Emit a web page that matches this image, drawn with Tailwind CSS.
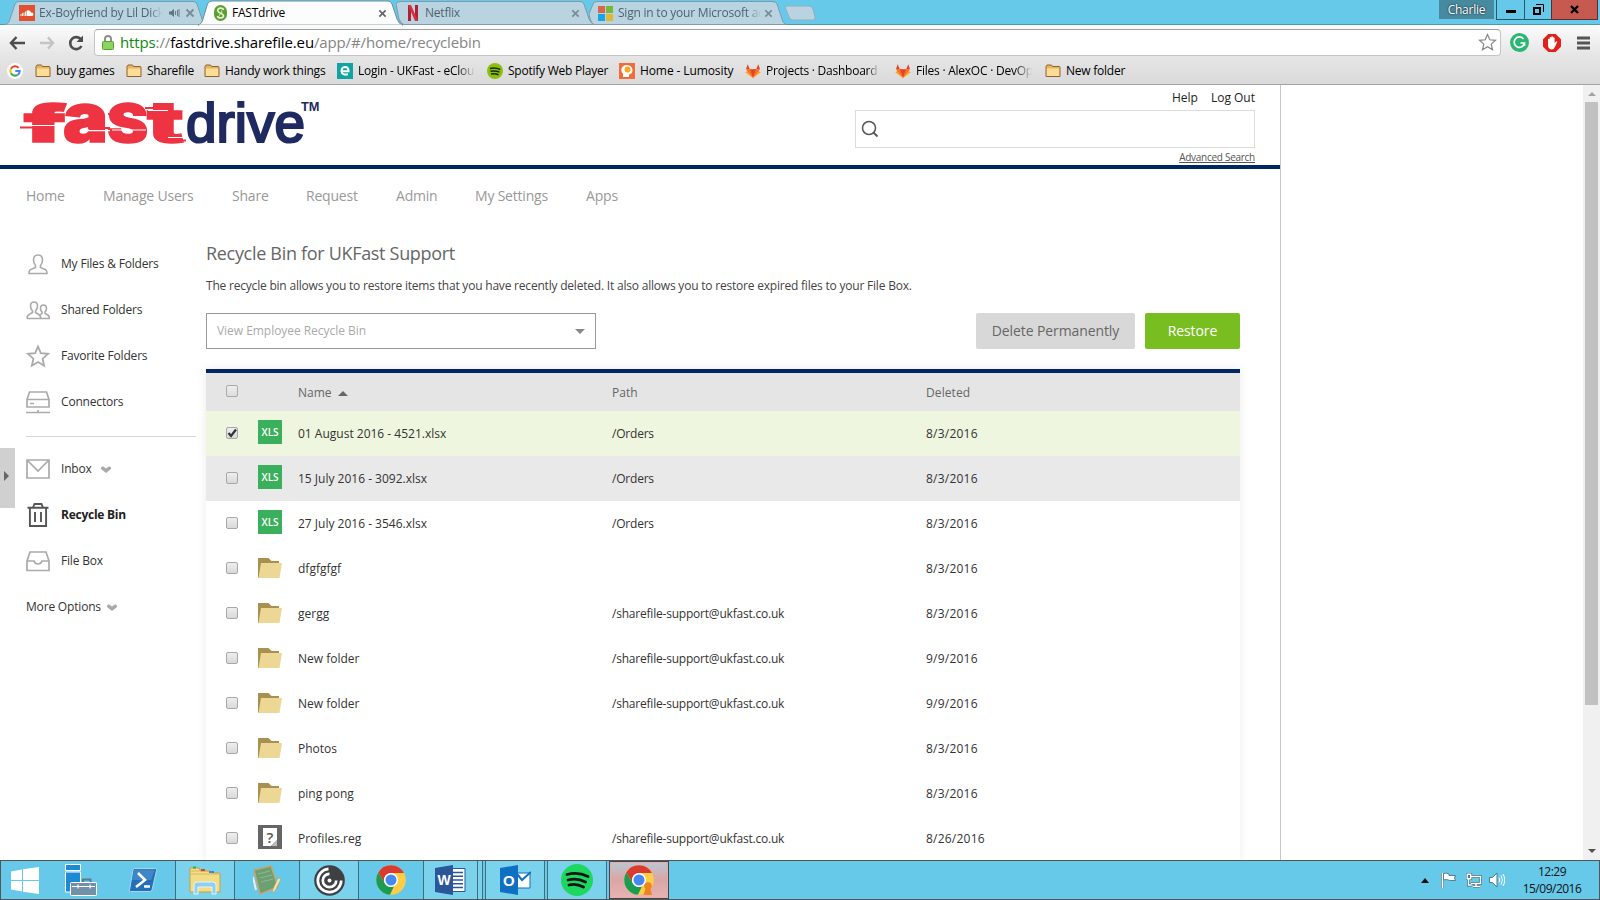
<!DOCTYPE html>
<html lang="en">
<head>
<meta charset="utf-8">
<title>FASTdrive</title>
<script src="https://cdn.jsdelivr.net/npm/@tailwindcss/browser@4"></script>
</head>
<body class="h-[900px] w-[1600px] overflow-hidden bg-white font-['Open_Sans',sans-serif] text-[12px] whitespace-nowrap">
<svg class="hidden">
  <symbol id="bm-folder" viewBox="0 0 16 14"><path d="M1 12.500V2.500L2 1h4.500l1 1.500H14.500L15 3.500V12.500z" fill="#e9b45c" stroke="#8a6534"/><path d="M1.800 4.500h12.400v7.500H1.800z" fill="#fddc96"/></symbol>
  <symbol id="close" viewBox="0 0 10 10"><path d="M1.500 1.500l7 7M8.500 1.500l-7 7" stroke="currentColor" stroke-width="1.900" fill="none"/></symbol>
  <symbol id="gitlab" viewBox="0 0 16 14"><path d="M8 14L0.200 8.200 5.200 5.200h5.600l5 3z" fill="#fca326"/><path d="M8 14L4.800 5.200h6.400z" fill="#e24329"/><path d="M8 14L1 5.200h3.800zM8 14l7-8.800h-3.800z" fill="#fc6d26"/><path d="M1 5.200L2.700.3l2.100 4.900zM15 5.200L13.300.3l-2.100 4.900z" fill="#e24329"/></symbol>
  <symbol id="folder" viewBox="0 0 24 20"><path d="M0 0h10.500l3 3H21v8L0 20z" fill="#a89150"/><path d="M3 5h21l-2.500 15H.5z" fill="#edd795"/></symbol>
  <symbol id="chrome" viewBox="0 0 30 30"><circle cx="15" cy="15" r="14.800" fill="#fecd45"/><path d="M2.200 7.600A14.800 14.800 0 0 1 27.900 8H15a7 7 0 0 0-6.200 10.300z" fill="#da3b30"/><path d="M2.200 7.600L9 18.500a7 7 0 0 0 9 2.800L14 29.800A14.800 14.800 0 0 1 2.200 7.600z" fill="#1a9c55"/><circle cx="15" cy="15" r="7" fill="#fff"/><circle cx="15" cy="15" r="5.500" fill="#4688f1"/></symbol>
  <symbol id="chev" viewBox="0 0 10 7"><path d="M0 1.500L1.800.2 5 2.500 8.200.2 10 1.500V3L5 7 0 3z" fill="#aaa"/></symbol>
</svg>

<!-- Window title bar with tabs -->
<header class="relative flex h-[25px] w-full items-start justify-between border-b border-[#4c98ad] bg-[#66c9ea] tracking-[-0.22px] text-[#4e6571]">
  <div class="flex">
    <div class="relative ml-1 flex h-[24px] w-[200px] items-center pt-[2px] pl-[15px]">
      <svg class="absolute top-0 left-0 h-[25px] w-[200px]" viewBox="0 0 200 25"><path d="M0 24.500C4 24.500 5 22 6 19L11 4Q12 1.500 15 1.500H189Q192 1.500 193 4L198 19Q199 24 200 24.500" fill="#b9d3e0" stroke="#7c9cab"/></svg>
      <svg class="relative size-4" viewBox="0 0 16 16"><path fill="#e2502d" d="M0 0h16v16H0z"/><path d="M2 9v2M3.500 8v3M5 7.500v3.500M6.500 6.500V11" stroke="#fff" stroke-width=".9"/><path d="M7.500 11V5.800a3 3 0 0 1 4.500 2 1.700 1.700 0 1 1 .5 3.200z" fill="#fff"/></svg>
      <span class="relative ml-1 w-[123px] overflow-hidden mask-r-from-90%">Ex-Boyfriend by Lil Dick</span>
      <svg class="relative ml-[7px] h-[10px] w-[11px]" viewBox="0 0 11 10"><path d="M0 3.500h2L5 1v8L2 6.500H0z" fill="#5f747e"/><path d="M6.500 3v4M8.500 2v6M10 1v8" stroke="#5f747e" stroke-width=".9"/></svg>
      <svg class="relative ml-[5px] size-[10px] text-[#7a8d97]"><use href="#close"/></svg>
    </div>
    <div class="relative z-10 -ml-[6px] flex h-[25px] w-[205px] items-center pt-[1px] pl-[16px] text-black">
      <svg class="absolute top-0 left-0 h-[26px] w-[205px]" viewBox="0 0 205 26"><path d="M0 25C3 24.500 4 22 5 19L9.500 4Q10.500 1 14 1H190Q193 1 194 4L199 19Q201 24.500 205 25z" fill="#fcfcfc" stroke="#6d8f9d"/><path d="M1 25.500h203" stroke="#fbfbfb" stroke-width="1.500"/></svg>
      <svg class="relative h-[16px] w-[13px]" viewBox="0 0 13 16"><rect width="13" height="16" rx="6.500" fill="#5a9e36"/><path d="M9.500 5C9 2.500 3.500 2.500 3.700 5.500S9.500 8 9.500 10.800 4 13.500 3.500 11" fill="none" stroke="#e8f4c8" stroke-width="1.700"/><path d="M7.500 5.500C9 8 5 9 5.500 10.500" fill="none" stroke="#e8f4c8"/></svg>
      <span class="relative ml-[5px]">FASTdrive</span>
      <svg class="absolute top-[9px] left-[180px] size-[9px] text-[#666]"><use href="#close"/></svg>
    </div>
    <div class="relative -ml-[7px] flex h-[24px] w-[200px] items-center pt-[2px] pl-[12px]">
      <svg class="absolute top-0 left-0 h-[25px] w-[200px]" viewBox="0 0 200 25"><path d="M0 4Q1 1.500 5 1.500H184Q187 1.500 188 4L193 19Q195 24 199 24.500H8Q5 24 3 19z" fill="#b9d3e0" stroke="#7c9cab"/></svg>
      <svg class="relative h-[16px] w-[10px]" viewBox="0 0 10 16"><path d="M0 0h3v16H0zM7 0h3v16H7z" fill="#b22033"/><path d="M0 0h3l7 16H7z" fill="#d0323f"/></svg>
      <span class="relative ml-[7px]">Netflix</span>
      <svg class="absolute top-[9px] left-[175px] size-[9px] text-[#7a8d97]"><use href="#close"/></svg>
    </div>
    <div class="relative -ml-[7px] flex h-[24px] w-[198px] items-center pt-[2px] pl-[9px]">
      <svg class="absolute top-0 left-0 h-[25px] w-[198px]" viewBox="0 0 198 25"><path d="M5 24.500Q2 24 0 14L4 4Q5 1.500 8 1.500H183Q187 1.500 188 4L193 19Q194 24 198 24.500z" fill="#b9d3e0" stroke="#7c9cab"/></svg>
      <svg class="relative size-[15px]" viewBox="0 0 15 15"><path fill="#d9654a" d="M0 0h7v7H0z"/><path fill="#7ab637" d="M8 0h7v7H8z"/><path fill="#18a5e5" d="M0 8h7v7H0z"/><path fill="#dfb836" d="M8 8h7v7H8z"/></svg>
      <span class="relative ml-[5px] w-[143px] overflow-hidden mask-r-from-90%">Sign in to your Microsoft ac</span>
      <svg class="absolute top-[9px] left-[175px] size-[9px] text-[#7a8d97]"><use href="#close"/></svg>
    </div>
    <svg class="-ml-[3px] h-[25px] w-[32px]" viewBox="0 0 32 25"><path d="M2.500 6H25Q28 6 29 9L31 17Q31.500 20 29 20H9Q6 20 5 17L1.500 8Q1.500 6 2.500 6z" fill="#b9d3e0" stroke="#8fb0c0"/></svg>
  </div>
  <div class="mr-[2px] flex">
    <div class="mr-[2px] flex h-[19px] w-[55px] items-center justify-center bg-[#478aa0] text-white text-shadow-[0_0_2px_#000]">Charlie</div>
    <div class="flex h-5 w-[29px] items-center justify-center border border-t-0 border-[#2b5868]"><i class="mt-[4px] h-[3px] w-[10px] bg-black"></i></div>
    <div class="flex h-5 w-[26px] items-center justify-center border-b border-[#2b5868]"><svg class="size-[11px]" viewBox="0 0 11 11"><path d="M1 4h6v6H1z" fill="none" stroke="#000" stroke-width="2"/><path d="M3 .500h7.500V8" fill="none" stroke="#000"/></svg></div>
    <div class="flex h-5 w-[47px] items-center justify-center border border-t-0 border-[#56302f] bg-[#c75a50]"><svg class="size-[9px]" viewBox="0 0 9 9"><path d="M1 1l7 7M8 1L1 8" stroke="#000" stroke-width="2.400"/></svg></div>
  </div>
</header>

<!-- Toolbar and bookmarks -->
<section class="flex h-[60px] flex-col border-b border-[#a3a3a3] bg-linear-to-b from-[#fcfcfc] via-[#e6e6e6] to-[#dadada] pt-1">
  <div class="flex h-[27px] items-center">
    <svg class="ml-[9px] h-[14px] w-[17px]" viewBox="0 0 17 14"><path d="M7.500 1L2 7l5.500 6M2 7h14" fill="none" stroke="#4d4d4d" stroke-width="2.500"/></svg>
    <svg class="ml-[13px] h-[14px] w-[16px]" viewBox="0 0 17 14"><path d="M9.500 1L15 7l-5.500 6M15 7H1" fill="none" stroke="#c4c4c4" stroke-width="2.500"/></svg>
    <svg class="ml-[13px] size-[16px]" viewBox="0 0 16 16"><path d="M13 4.500A6 6 0 1 0 13.500 11" fill="none" stroke="#4d4d4d" stroke-width="2.600"/><path d="M15 .5v6.500H8.500z" fill="#4d4d4d"/></svg>
    <div class="ml-[10px] flex h-[27px] w-[1407px] items-center rounded-sm border border-[#c4c4c4] border-t-[#9f9f9f] bg-white pl-[7px] text-[15px] tracking-[-0.13px] text-[#858585]">
      <svg class="h-[15px] w-3" viewBox="0 0 12 15"><path d="M3 7V4a3 3 0 0 1 6 0v3" fill="none" stroke="#8f8f8f" stroke-width="2"/><rect x=".5" y="6.500" width="11" height="8" rx="1" fill="#8dd35f" stroke="#59a52c"/></svg>
      <span class="ml-[6px]"><span class="text-[#0b8a0b]">https</span>://<span class="text-black">fastdrive.sharefile.eu</span>/app/#/home/recyclebin</span>
      <svg class="mr-[3px] ml-auto size-[19px]" viewBox="0 0 19 19"><path d="M9.500 1.500l2.300 5.300 5.700.5-4.300 3.800 1.300 5.700-5-3-5 3 1.300-5.700L1.500 7.300l5.700-.5z" fill="#fff" stroke="#858585" stroke-width="1.200"/></svg>
    </div>
    <svg class="ml-[9px] size-[19px]" viewBox="0 0 19 19"><circle cx="9.500" cy="9.500" r="9.500" fill="#2bb673"/><path d="M13.500 6A5.200 5.200 0 1 0 14.500 10H10.500M14.500 10v3" fill="none" stroke="#fff" stroke-width="1.700"/></svg>
    <svg class="ml-[14px] size-[18px]" viewBox="0 0 18 18"><path d="M5.300 0h7.400L18 5.300v7.400L12.700 18H5.300L0 12.700V5.300z" fill="#e3211c"/><path d="M5 9V5.500a.8.800 0 0 1 1.600 0V3.800a.8.800 0 0 1 1.700 0v-.8a.8.800 0 0 1 1.700 0v1a.8.800 0 0 1 1.600 0v5l1.500-1.600q1-.5 1.200.3l-2.300 5Q11 15.500 8.500 15.500 5 15 5 11z" fill="#fff"/></svg>
    <svg class="ml-[16px] h-[14px] w-[13px]" viewBox="0 0 13 14"><path d="M0 2h13M0 7h13M0 12h13" stroke="#555" stroke-width="2.800"/></svg>
  </div>
  <div class="flex h-[28px] items-center pt-px pl-[7px] tracking-[-0.24px] text-black">
    <svg class="size-4" viewBox="0 0 16 16"><circle cx="8" cy="8" r="8" fill="#fff"/><g fill="none" stroke-width="2"><path d="M11.500 4.800A4.600 4.600 0 0 0 4 5.800" stroke="#ea4335"/><path d="M4 5.800A4.600 4.600 0 0 0 4 10.200" stroke="#fbbc05"/><path d="M4 10.200A4.600 4.600 0 0 0 10.800 11.700" stroke="#34a853"/><path d="M10.800 11.700A4.600 4.600 0 0 0 12.700 8H8.300" stroke="#4285f4"/></g></svg>
    <svg class="ml-3 h-[14px] w-4"><use href="#bm-folder"/></svg><span class="ml-[5px] w-[70px]">buy games</span>
    <svg class="h-[14px] w-4"><use href="#bm-folder"/></svg><span class="ml-[5px] w-[57px]">Sharefile</span>
    <svg class="h-[14px] w-4"><use href="#bm-folder"/></svg><span class="ml-[5px] w-[112px]">Handy work things</span>
    <svg class="size-4" viewBox="0 0 16 16"><path fill="#0fa3a3" d="M0 0h16v16H0z"/><path d="M4.500 8.300h7Q11.500 4 8 4 4.500 4.300 4.500 8.300q.5 4.200 6.500 3" fill="none" stroke="#fff" stroke-width="2"/></svg><span class="ml-[5px] w-[117px] overflow-hidden mask-r-from-85%">Login - UKFast - eCloud</span>
    <svg class="ml-[12px] size-4" viewBox="0 0 16 16"><circle cx="8" cy="8" r="8" fill="#8cbe12"/><path d="M3 5.500q5.500-1.500 10.200 1M3.500 8.300q5-1 9 .8M4 11q4-.8 7.500.8" fill="none" stroke="#1c2a05" stroke-width="1.500"/></svg><span class="ml-[5px] w-[111px]">Spotify Web Player</span>
    <svg class="size-4" viewBox="0 0 16 16"><path fill="#f26b38" d="M0 0h16v16H0z"/><path d="M4 14v-3.500Q2 9 2.300 6.500 3 2 8 2q5 .3 5.500 5 0 4-3.500 4.500V14z" fill="#fff"/><circle cx="8.500" cy="6.500" r="3" fill="#f7a823"/></svg><span class="ml-[5px] w-[105px] tracking-[-0.1px]">Home - Lumosity</span>
    <svg class="h-[14px] w-4"><use href="#gitlab"/></svg><span class="ml-[5px] w-[113px] overflow-hidden mask-r-from-90%">Projects · Dashboard · Git</span>
    <svg class="ml-[16px] h-[14px] w-4"><use href="#gitlab"/></svg><span class="ml-[5px] w-[116px] overflow-hidden mask-r-from-85%">Files · AlexOC · DevOps</span>
    <svg class="ml-[13px] h-[14px] w-4"><use href="#bm-folder"/></svg><span class="ml-[5px]">New folder</span>
  </div>
</section>

<!-- Page viewport -->
<div class="flex h-[775px] overflow-hidden">
  <div class="relative h-full w-[1281px] border-r border-[#c8c8c8]">
    <div class="flex h-[84px] justify-between border-b-4 border-[#002664] pr-[25px] pl-[20px]">
      <svg class="mt-[12px] h-[52px] w-[304px]" viewBox="0 0 304 52" font-family="Inter" font-weight="900">
        <g fill="#ee3342" stroke="#ee3342" stroke-width="1.500">
          <text x="4" y="44.500" font-size="52" textLength="42" lengthAdjust="spacingAndGlyphs">f</text>
          <text x="43" y="44.500" font-size="69" textLength="45" lengthAdjust="spacingAndGlyphs">a</text>
          <text x="87" y="44.500" font-size="52" textLength="41" lengthAdjust="spacingAndGlyphs">S</text>
          <text x="127" y="44.500" font-size="56" textLength="37" lengthAdjust="spacingAndGlyphs">t</text>
        </g>
        <path d="M4 21h20M0 30.500h20M68 31h22M88 17h14M125 11h14M144 43.500h22" stroke="#ee3342" stroke-width="2"/>
        <path d="M8 28.500h36M66 33.700h24M92 33h34M128 13.500h20M148 40.500h18" stroke="#fff" stroke-width="1.200"/>
        <text x="166" y="44.500" font-family="Liberation Sans" font-size="55" font-weight="normal" fill="#1f2a60" stroke="#1f2a60" stroke-width="2.200" textLength="119" lengthAdjust="spacingAndGlyphs">drive</text>
        <text x="281" y="14" font-family="Liberation Sans" font-size="12.500" font-weight="bold" fill="#1f2a60" textLength="18.500" lengthAdjust="spacingAndGlyphs">TM</text>
      </svg>
      <div class="flex flex-col items-end text-[12px] text-[#222]">
        <div class="mt-[4px] flex h-[18px] items-center gap-[13px]"><span>Help</span><span>Log Out</span></div>
        <div class="mt-[3px] flex h-[38px] w-[400px] items-center border border-[#dcdcdc] pl-[5px]"><svg class="size-[18px]" viewBox="0 0 18 18"><circle cx="8" cy="8" r="6.500" fill="none" stroke="#555" stroke-width="1.500"/><path d="M12.500 12.500L16.500 16.500" stroke="#555" stroke-width="1.800"/></svg></div>
        <span class="mt-[2px] text-[10px] leading-[14px] tracking-[-0.27px] text-[#555] underline">Advanced Search</span>
      </div>
    </div>
    <nav class="flex h-[52px] items-center pl-[26px] text-[14px] tracking-[-0.2px] text-[#999]">
      <span class="w-[77px]">Home</span><span class="w-[129px]">Manage Users</span><span class="w-[74px]">Share</span><span class="w-[90px]">Request</span><span class="w-[79px]">Admin</span><span class="w-[111px]">My Settings</span><span>Apps</span>
    </nav>
    <div class="flex pt-[2px]">
      <aside class="w-[206px] pt-[18px] pl-[26px] text-[12px] tracking-[-0.18px] text-[#333]">
        <div class="flex h-[46px] items-center gap-[11px]"><svg class="size-6" viewBox="0 0 24 24" fill="none" stroke="#aaa" stroke-width="1.600"><path d="M3 21.500Q3 17.500 6 17L9.500 15.500V13.500Q7.500 11.500 7.500 8 7.500 3 12 3t4.500 5q0 3.500-2 5.500v2L18 17q3 .5 3 4.500z"/></svg><span>My Files &amp; Folders</span></div>
        <div class="flex h-[46px] items-center gap-[11px]"><svg class="size-6" viewBox="0 0 24 24" fill="none" stroke="#aaa" stroke-width="1.600"><path d="M1 20.500Q1 17 4 16L6.500 14.500V13Q4.500 11 4.500 8 4.500 4 8 4t3.500 4q0 3-2 5v1.500L12 16q2.500 1 3 4.500M1 20.500H23.500Q23.500 17.500 21 16.500l-2-1V14q1.500-1.500 1.500-3.500Q20.500 7 17.500 7t-3 3.500Q14.500 12.500 16 14v1.500L14.500 16.500"/></svg><span>Shared Folders</span></div>
        <div class="flex h-[46px] items-center gap-[11px]"><svg class="size-6" viewBox="0 0 24 24" fill="none" stroke="#aaa" stroke-width="1.800"><path d="M12 2.500l2.800 6.600 7.200.7-5.400 4.900 1.500 7L12 18l-6.100 3.700 1.500-7L2 9.800l7.200-.7z"/></svg><span>Favorite Folders</span></div>
        <div class="flex h-[46px] items-center gap-[11px]"><svg class="size-6" viewBox="0 0 24 24" fill="none" stroke="#aaa" stroke-width="1.700"><path d="M1 9.500L3.500 2h17L23 9.500V17H1zM1 9.500h22M4 13.500h4M0 22.500h24M12 20v2"/></svg><span>Connectors</span></div>
        <div class="mt-[11px] h-[10px] w-[170px] border-t border-[#d6d6d6]"></div>
        <div class="flex h-[46px] items-center gap-[11px]"><svg class="size-6" viewBox="0 0 24 24" fill="none" stroke="#aaa" stroke-width="1.700"><path d="M1 3h22v18H1zM1.500 3.500L12 14 22.500 3.500"/></svg><span>Inbox</span><svg class="-ml-[2px] h-[7px] w-[10px]"><use href="#chev"/></svg></div>
        <div class="flex h-[46px] items-center gap-[11px] text-[#222]"><svg class="size-6" viewBox="0 0 24 24" fill="none" stroke="#555" stroke-width="1.900"><path d="M1.500 4.800h21M3.900 5v18h16.200V5M7 4.500L8.500 1h7L17 4.500M9 9v10M15 9v10"/></svg><span class="font-bold tracking-[-0.25px]">Recycle Bin</span></div>
        <div class="flex h-[46px] items-center gap-[11px]"><svg class="size-6" viewBox="0 0 24 24" fill="none" stroke="#aaa" stroke-width="1.700"><path d="M1 12L4 3h16l3 9v9.500H1zM1 12h7q1 3 4 3t4-3h7"/></svg><span>File Box</span></div>
        <div class="flex h-[46px] items-center gap-[6px]"><span>More Options</span><svg class="h-[7px] w-[10px]"><use href="#chev"/></svg></div>
      </aside>
      <main class="w-[1034px]">
        <h1 class="mt-[15px] h-[30px] text-[18px] leading-[30px] tracking-[-0.31px] text-[#666]">Recycle Bin for UKFast Support</h1>
        <p class="mt-[8px] h-[20px] text-[12px] leading-[20px] tracking-[-0.205px] text-[#444]">The recycle bin allows you to restore items that you have recently deleted. It also allows you to restore expired files to your File Box.</p>
        <div class="mt-[17px] flex h-[36px]">
          <div class="flex w-[390px] items-center justify-between border border-[#999] pr-[10px] pl-[10px] text-[#aaa]"><span class="tracking-[-0.04px]">View Employee Recycle Bin</span><i class="border-x-5 border-t-5 border-transparent border-t-[#888]"></i></div>
          <div class="ml-auto flex w-[159px] items-center justify-center rounded-xs bg-[#d8d8d8] pb-px text-[14px] font-medium tracking-[-0.1px] text-[#666]">Delete Permanently</div>
          <div class="ml-[10px] flex w-[95px] items-center justify-center rounded-xs bg-[#79be20] pb-px text-[14px] font-medium tracking-[-0.1px] text-white">Restore</div>
        </div>
        <div id="table" class="mt-[20px] border-t-4 border-[#002664] text-[12px] text-[#333] shadow-[0_0_10px_rgba(0,0,0,0.08)]">
          <div class="flex h-[38px] items-center bg-[#e5e5e5] pl-5 text-[#666]"><i class="mb-[2px] size-3 rounded-xs border border-[#aaa] bg-linear-to-b from-[#eee] to-[#ddd]"></i><div class="ml-[60px] flex w-[314px] items-center gap-[6px] pt-[2px]"><span>Name</span><svg class="h-[5px] w-[10px]" viewBox="0 0 10 5"><path d="M5 0l5 5H0z" fill="#666"/></svg></div><span class="w-[314px] pt-[2px]">Path</span><span class="pt-[2px] tracking-[0.1px]">Deleted</span></div>
        </div>
      </main>
    </div>
    <div class="absolute top-[363px] left-0 flex h-[60px] w-[15px] items-center bg-[#d0d0d0] pl-1"><svg class="-mt-1 h-[10px] w-[5px]" viewBox="0 0 5 10"><path d="M0 0l5 5-5 5z" fill="#666"/></svg></div>
  </div>
  <div class="ml-auto flex w-[17px] flex-col items-center bg-[#f0f0f0]">
    <svg class="mt-[7px] h-[4px] w-[8px]" viewBox="0 0 8 4"><path d="M4 0l4 4H0z" fill="#a3a3a3"/></svg>
    <div class="mt-[6px] h-[603px] w-[13px] bg-[#c1c1c1]"></div>
    <svg class="mt-auto mb-[7px] h-[4px] w-[8px]" viewBox="0 0 8 4"><path d="M4 4l4-4H0z" fill="#505050"/></svg>
  </div>
</div>

<!-- Taskbar -->
<footer class="flex h-10 border border-[#555] bg-[#66c9ea]">
  <div class="flex w-[174px] items-center">
    <svg class="ml-[10px] h-[27px] w-[28px]" viewBox="0 0 28 27"><path d="M0 4.500l11-2V13H0zM12 2.300L28 0v13H12zM0 14h11v10.500l-11-2zM12 14h16v13l-16-2.300z" fill="#fff"/></svg>
    <svg class="ml-[26px] h-[32px] w-[32px]" viewBox="0 0 32 32"><path d="M.5.500h15v6H.5zM.5 8h15v20H.5z" fill="#1d8ad6" stroke="#fff"/><path d="M18 18v-2.500h7.500V18" fill="none" stroke="#5f7a8c" stroke-width="2"/><rect x="9.500" y="18.500" width="22" height="13" rx="1" fill="#7391a6" stroke="#fff"/><rect x="5.500" y="18.500" width="26" height="13" rx="1" fill="#7391a6" stroke="#fff"/><path d="M7 22.500h23M13 20.500v4M25 20.500v4" stroke="#fff" stroke-width="1.200"/></svg>
    <svg class="ml-[32px] h-[24px] w-[28px]" viewBox="0 0 28 24"><path d="M5.500.5h21q1.500 0 1 2L23 22q-.5 1.500-2 1.500H1.500Q0 23.500.5 22L4 2Q4.500.5 5.500.5z" fill="#2470b8" stroke="#a8d4ec"/><path d="M5 1.500h21L22 12H3z" fill="#4f94d0" opacity=".6"/><path d="M9 5l7 7-9 7M15 18.500h6" fill="none" stroke="#fff" stroke-width="2.600"/></svg>
  </div>
  <div class="flex w-[60px] items-center justify-center border-x border-[#3f6d7e] bg-[#7bd2ed]"><svg class="h-[30px] w-8" viewBox="0 0 32 30"><path d="M1 27V3h9l1.500 3H21l1 2h9v19z" fill="#f3dc86" stroke="#c69f44"/><path d="M1.500 9h29M1.500 6h20" stroke="#d9b65b"/><path d="M4 1.500h3v2H4z" fill="#2bb04a"/><path d="M12 4h4v2h-4z" fill="#d4492b"/><path d="M20 6h5v2h-5z" fill="#3b88d8"/><path d="M5 29V20q0-3 3-3h16q3 0 3 3v9h-4v-7H9v7z" fill="#8fd0f2" stroke="#e4f5fd"/></svg></div>
  <div class="flex w-[64px] items-center justify-center"><svg class="h-[30px] w-7" viewBox="0 0 28 30"><path d="M0 12L3 25" stroke="#eee" stroke-width="2"/><path d="M1 5L18 1l7 21-18 7z" fill="#6c9f72" stroke="#c4a66d" stroke-width="1.500"/><path d="M5 9l12-3M7 13l12-3M8 17l12-3" stroke="#8fb990"/><path d="M28 14l-6 12-3 2 1-4 5-11z" fill="#efe6b0" stroke="#a99a63" stroke-width=".6"/></svg></div>
  <div class="flex w-[60px] items-center justify-center border-x border-[#3f6d7e] bg-[#7bd2ed]"><svg class="size-[31px]" viewBox="0 0 31 31"><circle cx="15.500" cy="15.500" r="15.300" fill="#3f4043"/><circle cx="15.500" cy="15.500" r="2" fill="#fff"/><path d="M14.500 3.800A11.700 11.700 0 1 0 27.200 15.500M15.500 8.800A6.700 6.700 0 1 0 22.200 15.500" fill="none" stroke="#fff" stroke-width="2.700"/></svg></div>
  <div class="flex w-[64px] items-center justify-center"><svg class="size-[30px]"><use href="#chrome"/></svg></div>
  <div class="flex w-[60px] border border-y-0 border-[#3f6d7e] bg-[#7bd2ed]"><div class="flex w-[54px] items-center justify-center border-r border-[#3f6d7e]"><svg class="h-[30px] w-[31px]" viewBox="0 0 31 30"><path d="M16 3.500h14v23H16z" fill="#fff" stroke="#2b579a"/><path d="M18 7.500h10M18 11.200h10M18 15h10M18 18.800h10M18 22.500h10" stroke="#2b579a" stroke-width="1.400"/><path d="M0 3L18 0v30L0 27z" fill="#2b579a"/><text x="2.500" y="20" font-family="Liberation Sans" font-weight="bold" font-size="14" fill="#fff">W</text></svg></div></div>
  <div class="ml-[2px] flex w-[60px] items-center justify-center border-x border-[#3f6d7e] bg-[#7bd2ed]"><svg class="h-[30px] w-[31px]" viewBox="0 0 31 30"><path d="M17 8h13v15H17z" fill="#fff" stroke="#0f6fc0"/><path d="M17 9l5 6 9-8" fill="none" stroke="#0f6fc0" stroke-width="2"/><path d="M0 3L18 0v30L0 27z" fill="#0f6fc0"/><text x="3" y="20.500" font-family="Liberation Sans" font-weight="bold" font-size="15" fill="#fff">O</text></svg></div>
  <div class="ml-[2px] flex w-[60px] items-center justify-center border-x border-[#3f6d7e] bg-[#7bd2ed]"><svg class="size-8" viewBox="0 0 32 32"><circle cx="16" cy="16" r="16" fill="#1ed760"/><path d="M6 10.500q11-3 21 2M7 16q9-2.500 17.500 2M8 21q7-2 14.500 2" fill="none" stroke="#191414" stroke-width="2.800" stroke-linecap="round"/></svg></div>
  <div class="ml-[2px] flex w-[60px] items-center justify-center border-2 border-[#eca9a6] bg-linear-to-b from-[#b9c6d0] via-[#dba5a5] to-[#e6b3b1] outline -outline-offset-1 outline-[#3a4a50]"><svg class="size-[30px]" viewBox="0 0 30 30"><use href="#chrome"/><path d="M24 17a4 4 0 0 1 2.500 7L28 30H19.500l2-6A4 4 0 0 1 24 17z" fill="#ee8322"/></svg></div>
  <div class="ml-auto flex items-center">
    <svg class="h-[5px] w-[8px]" viewBox="0 0 8 5"><path d="M4 0l4 5H0z" fill="#111"/></svg>
    <svg class="ml-[12px] h-[16px] w-4" viewBox="0 0 16 16"><path d="M1.500 1v15" stroke="#4b7585" stroke-width="3"/><path d="M1.500 1v15" stroke="#fff" stroke-width="1.600"/><path d="M2.500 1.500q3-1 5.500.5v1.500h6.500q-2 2.500 0 5H8.500L7.500 8q-2-1-5 0z" fill="#fff" stroke="#4b7585" stroke-width=".9"/></svg>
    <svg class="ml-[9px] h-[15px] w-[16px]" viewBox="0 0 16 15" fill="none"><g stroke="#3f6b7b" stroke-width="2.800"><path d="M5 3.500h9.500v7H5M10 10.500V13M7 13.500h7M2.500 6v6h3M1.200 1.200h3.500v4.500H1.200z"/></g><g stroke="#fff" stroke-width="1.400"><path d="M5 3.500h9.500v7H5M10 10.500V13M7 13.500h7M2.500 6v6h3M1.200 1.200h3.500v4.500H1.200z"/></g></svg>
    <svg class="ml-[7px] h-[16px] w-[16px]" viewBox="0 0 16 16"><path d="M.5 5.500h3L8 1v14l-4.500-4.500h-3z" fill="#fff" stroke="#3f6b7b" stroke-width=".9"/><path d="M10 5.500q1.500 2.500 0 5M12 3.500q3 4.500 0 9M14 2q3.500 6 0 12" fill="none" stroke="#fff"/></svg>
    <div class="mr-[9px] ml-[9px] flex w-[76px] flex-col items-center text-[12px] leading-[17px] tracking-[-0.5px] text-[#111]"><span>12:29</span><span>15/09/2016</span></div>
  </div>
</footer>

<script>
const files = [
  ['xls','01 August 2016 - 4521.xlsx','/Orders','8/3/2016'],
  ['xls','15 July 2016 - 3092.xlsx','/Orders','8/3/2016'],
  ['xls','27 July 2016 - 3546.xlsx','/Orders','8/3/2016'],
  ['folder','dfgfgfgf','','8/3/2016'],
  ['folder','gergg','/sharefile-support@ukfast.co.uk','8/3/2016'],
  ['folder','New folder','/sharefile-support@ukfast.co.uk','9/9/2016'],
  ['folder','New folder','/sharefile-support@ukfast.co.uk','9/9/2016'],
  ['folder','Photos','','8/3/2016'],
  ['folder','ping pong','','8/3/2016'],
  ['reg','Profiles.reg','/sharefile-support@ukfast.co.uk','8/26/2016'],
];
const icons = {
  xls: '<div class="mb-[3px] flex size-6 items-center justify-center bg-[#3aaf5c] text-[10px] font-semibold text-white">XLS</div>',
  folder: '<svg class="mb-[2px] h-5 w-6"><use href="#folder"/></svg>',
  reg: '<div class="mb-[3px] flex size-6 items-center justify-center bg-[#666]"><div class="flex h-[18px] w-[14px] items-center justify-center bg-[linear-gradient(135deg,#fff_80%,#bbb_80%)] text-[15px] leading-none font-semibold text-[#555]">?</div></div>',
};
document.getElementById('table').insertAdjacentHTML('beforeend', files.map(([k,n,p,d],i) => `
  <div class="flex h-[45px] items-center pl-5 ${i===0?'bg-[#eef6df]':i===1?'bg-[#e9e9e9]':'bg-white'}">
    <i class="mb-[1px] size-3 rounded-xs border border-[#a8a8a8] bg-linear-to-b from-[#eee] to-[#d9d9d9]">${i===0?'<svg viewBox="0 0 10 10"><path d="M1.500 5l2.500 3L9 1.500" fill="none" stroke="#333" stroke-width="2.200"/></svg>':''}</i>
    <span class="ml-5 w-10">${icons[k]}</span>
    <span class="w-[314px] pt-px">${n}</span><span class="w-[314px] pt-px tracking-[-0.21px]">${p}</span><span class="pt-px tracking-[0.22px]">${d}</span>
  </div>`).join(''));
</script>
</body>
</html>
